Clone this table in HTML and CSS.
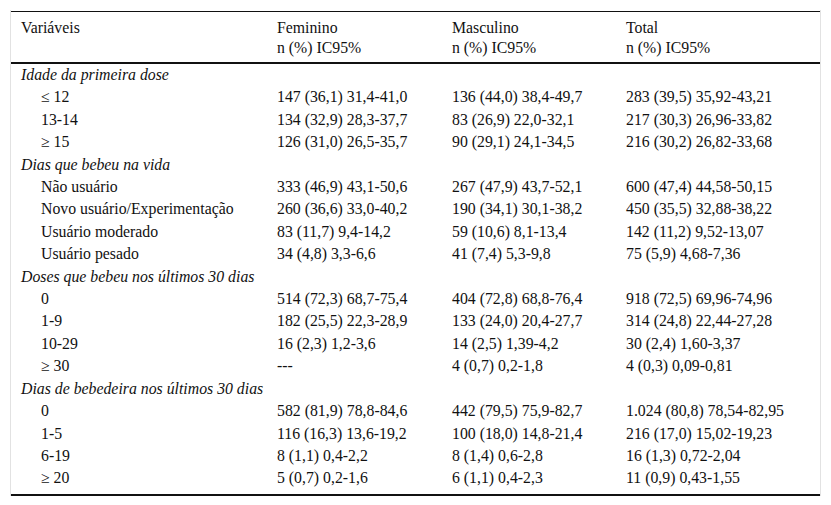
FILE: index.html
```html
<!DOCTYPE html>
<html lang="pt">
<head>
<meta charset="utf-8">
<title>Tabela</title>
<link rel="stylesheet" href="styles.css">
</head>
<body>
<div class="frame">
<table class="data">
<colgroup>
<col class="c1"><col class="c2"><col class="c3"><col class="c4">
</colgroup>
<thead>
<tr>
<th>Variáveis</th>
<th>Feminino<br>n (%) IC95%</th>
<th>Masculino<br>n (%) IC95%</th>
<th>Total<br>n (%) IC95%</th>
</tr>
</thead>
<tbody>
<tr class="group"><td colspan="4">Idade da primeira dose</td></tr>
<tr><td class="ind">≤ 12</td><td>147 (36,1) 31,4-41,0</td><td>136 (44,0) 38,4-49,7</td><td>283 (39,5) 35,92-43,21</td></tr>
<tr><td class="ind">13-14</td><td>134 (32,9) 28,3-37,7</td><td>83 (26,9) 22,0-32,1</td><td>217 (30,3) 26,96-33,82</td></tr>
<tr><td class="ind">≥ 15</td><td>126 (31,0) 26,5-35,7</td><td>90 (29,1) 24,1-34,5</td><td>216 (30,2) 26,82-33,68</td></tr>
<tr class="group"><td colspan="4">Dias que bebeu na vida</td></tr>
<tr><td class="ind">Não usuário</td><td>333 (46,9) 43,1-50,6</td><td>267 (47,9) 43,7-52,1</td><td>600 (47,4) 44,58-50,15</td></tr>
<tr><td class="ind">Novo usuário/Experimentação</td><td>260 (36,6) 33,0-40,2</td><td>190 (34,1) 30,1-38,2</td><td>450 (35,5) 32,88-38,22</td></tr>
<tr><td class="ind">Usuário moderado</td><td>83 (11,7) 9,4-14,2</td><td>59 (10,6) 8,1-13,4</td><td>142 (11,2) 9,52-13,07</td></tr>
<tr><td class="ind">Usuário pesado</td><td>34 (4,8) 3,3-6,6</td><td>41 (7,4) 5,3-9,8</td><td>75 (5,9) 4,68-7,36</td></tr>
<tr class="group"><td colspan="4">Doses que bebeu nos últimos 30 dias</td></tr>
<tr><td class="ind">0</td><td>514 (72,3) 68,7-75,4</td><td>404 (72,8) 68,8-76,4</td><td>918 (72,5) 69,96-74,96</td></tr>
<tr><td class="ind">1-9</td><td>182 (25,5) 22,3-28,9</td><td>133 (24,0) 20,4-27,7</td><td>314 (24,8) 22,44-27,28</td></tr>
<tr><td class="ind">10-29</td><td>16 (2,3) 1,2-3,6</td><td>14 (2,5) 1,39-4,2</td><td>30 (2,4) 1,60-3,37</td></tr>
<tr><td class="ind">≥ 30</td><td>---</td><td>4 (0,7) 0,2-1,8</td><td>4 (0,3) 0,09-0,81</td></tr>
<tr class="group"><td colspan="4">Dias de bebedeira nos últimos 30 dias</td></tr>
<tr><td class="ind">0</td><td>582 (81,9) 78,8-84,6</td><td>442 (79,5) 75,9-82,7</td><td>1.024 (80,8) 78,54-82,95</td></tr>
<tr><td class="ind">1-5</td><td>116 (16,3) 13,6-19,2</td><td>100 (18,0) 14,8-21,4</td><td>216 (17,0) 15,02-19,23</td></tr>
<tr><td class="ind">6-19</td><td>8 (1,1) 0,4-2,2</td><td>8 (1,4) 0,6-2,8</td><td>16 (1,3) 0,72-2,04</td></tr>
<tr class="last"><td class="ind">≥ 20</td><td>5 (0,7) 0,2-1,6</td><td>6 (1,1) 0,4-2,3</td><td>11 (0,9) 0,43-1,55</td></tr>
</tbody>
</table>
</div>
</body>
</html>
```
FILE: styles.css
```css
html, body {
  margin: 0;
  padding: 0;
  background: #ffffff;
}

body {
  font-family: "Liberation Serif", "Times New Roman", serif;
  font-size: 15.8px;
  color: #111;
}

.frame {
  margin: 10px 0 0 10px;
  width: 809px;
  padding-top: 1px;
  border-left: 1px solid #e2e2e2;
  border-right: 1px solid #e2e2e2;
}

.data {
  width: 809px;
  table-layout: fixed;
  border-collapse: collapse;
  border-top: 1px solid #111;
  border-bottom: 2px solid #111;
}

.c1 { width: 256px; }
.c2 { width: 175px; }
.c3 { width: 174px; }
.c4 { width: 204px; }

.data thead th {
  font-weight: normal;
  text-align: left;
  vertical-align: top;
  line-height: 20px;
  padding: 6px 10px 4px 10px;
  border-bottom: 2px solid #111;
}

.data tbody td {
  padding: 0 10px;
  line-height: 22.4px;
  white-space: nowrap;
}

.data tbody .group td {
  font-style: italic;
}

.data tbody td.ind {
  padding-left: 30px;
}

.data tbody .last td {
  padding-bottom: 4px;
}
```
